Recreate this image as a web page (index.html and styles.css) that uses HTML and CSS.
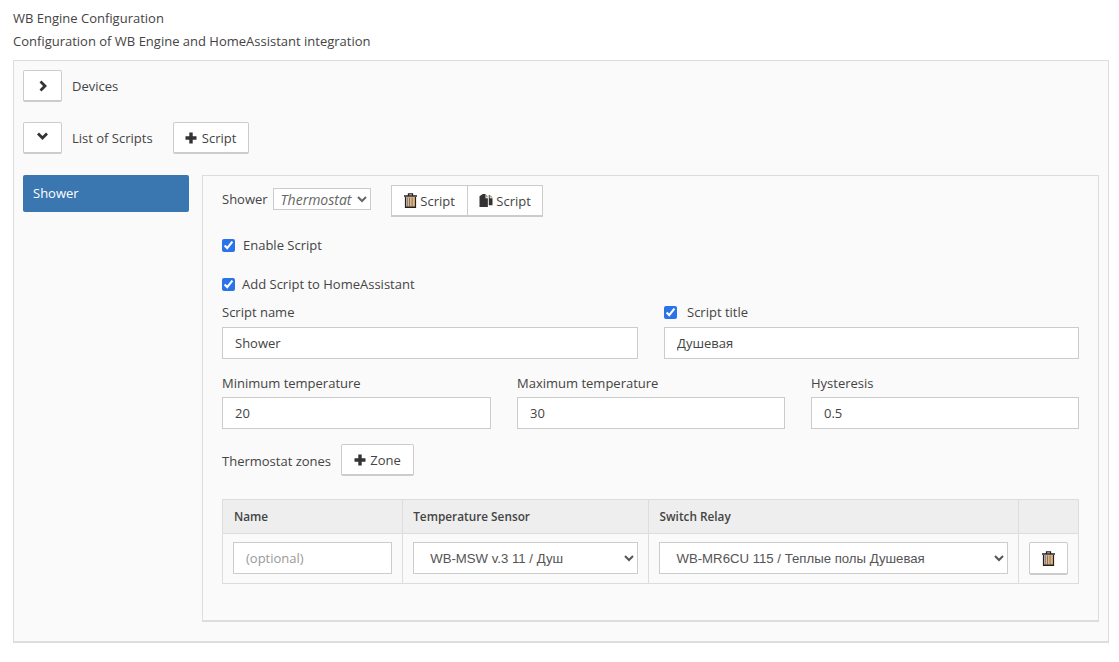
FILE: index.html
```html
<!DOCTYPE html>
<html lang="en">
<head>
<meta charset="utf-8">
<title>WB Engine Configuration</title>
<link rel="stylesheet" href="styles.css">
</head>
<body>
<div class="page">
  <div class="title">WB Engine Configuration</div>
  <div class="subtitle">Configuration of WB Engine and HomeAssistant integration</div>
  <div class="well">
    <div class="row row-devices">
      <button class="btn btn-toggle" type="button"><svg class="ico" width="12" height="12" viewBox="0 0 12 12"><path d="M3.500 1.500 8 6l-4.500 4.500" fill="none" stroke="#333" stroke-width="2.800"/></svg></button>
      <span>Devices</span>
    </div>
    <div class="row row-list">
      <button class="btn btn-toggle" type="button"><svg class="ico ico-up" width="13" height="12" viewBox="0 0 13 12"><path d="M2 3.500 6.500 8 11 3.500" fill="none" stroke="#333" stroke-width="2.800"/></svg></button>
      <span>List of Scripts</span>
      <button class="btn btn-add" type="button"><svg class="ico" width="12" height="12" viewBox="0 0 12 12"><path d="M6 .5v11M.5 6h11" fill="none" stroke="#333" stroke-width="3.400"/></svg>Script</button>
    </div>
    <div class="content">
      <div class="sidebar"><div class="side-item">Shower</div></div>
      <div class="panel">
        <div class="script-head">
          <span>Shower</span>
          <select class="type-select"><option>Thermostat</option></select>
          <div class="btn-group">
            <button class="btn btn-grp" type="button"><svg class="ico" width="13" height="15" viewBox="0 0 13 15"><use href="#trash"/></svg>Script</button>
            <button class="btn btn-grp" type="button"><svg class="ico" width="14" height="13" viewBox="0 0 14 14"><path d="M0 2.500 3.500 0h3v4.500H9V14H0z" fill="#333"/><path d="M10 1h1v3.500h3V12H10z" fill="#333"/><path d="M7.300 .5 9 3.500H7.300z" fill="#666"/><path d="M11.700 1 14 3.700H11.700z" fill="#b9772e"/></svg>Script</button>
          </div>
        </div>
        <label class="check check-enable"><input type="checkbox" checked>Enable Script</label>
        <label class="check check-ha"><input type="checkbox" checked>Add Script to HomeAssistant</label>
        <div class="fields fields-two">
          <div class="field">
            <div class="field-label">Script name</div>
            <input class="input" type="text" value="Shower">
          </div>
          <div class="field">
            <label class="field-label check-title"><input type="checkbox" checked>Script title</label>
            <input class="input" type="text" value="Душевая">
          </div>
        </div>
        <div class="fields fields-three">
          <div class="field">
            <div class="field-label">Minimum temperature</div>
            <input class="input" type="text" value="20">
          </div>
          <div class="field">
            <div class="field-label">Maximum temperature</div>
            <input class="input" type="text" value="30">
          </div>
          <div class="field">
            <div class="field-label">Hysteresis</div>
            <input class="input" type="text" value="0.5">
          </div>
        </div>
        <div class="zones-head">
          <span>Thermostat zones</span>
          <button class="btn btn-zone" type="button"><svg class="ico" width="12" height="12" viewBox="0 0 12 12"><path d="M6 .5v11M.5 6h11" fill="none" stroke="#333" stroke-width="3.400"/></svg>Zone</button>
        </div>
        <table class="zones">
          <colgroup>
            <col class="col-name"><col class="col-sensor"><col class="col-relay"><col class="col-action">
          </colgroup>
          <thead>
            <tr><th>Name</th><th>Temperature Sensor</th><th>Switch Relay</th><th></th></tr>
          </thead>
          <tbody>
            <tr>
              <td><input class="input input-cell" type="text" placeholder="(optional)"></td>
              <td><select class="cell-select"><option>WB-MSW v.3 11 / Душ</option></select></td>
              <td><select class="cell-select"><option>WB-MR6CU 115 / Теплые полы Душевая</option></select></td>
              <td><button class="btn btn-del" type="button"><svg class="ico" width="13" height="15" viewBox="0 0 13 15"><use href="#trash"/></svg></button></td>
            </tr>
          </tbody>
        </table>
      </div>
    </div>
  </div>
</div>
<svg class="defs" width="0" height="0" aria-hidden="true">
  <symbol id="trash" viewBox="0 0 13 15">
    <path d="M4.500 2.500V.8h4v1.700M0 3h13" fill="none" stroke="#222" stroke-width="1.300"/>
    <path d="M1.500 4h10v10.500h-10z" fill="#eeb070"/>
    <path d="M5 4.500h1v9H5zM7.600 4.500h1v9H7.600zM3 4.500h.8v9H3z" fill="#5f80a4"/>
    <path d="M1.500 4v10.500h10V4M1.500 14h10" fill="none" stroke="#222" stroke-width="1.200"/>
  </symbol>
</svg>
</body>
</html>
```
FILE: styles.css
```css
* { box-sizing: border-box; }
html, body { margin: 0; background: #fff; }
body { font-family: "Open Sans", "Noto Sans", sans-serif; font-size: 13px; color: #444; }
.page { padding: 9px 10px 0 13px; }
.defs { position: absolute; }
.title { height: 23px; line-height: 19px; }
.subtitle { height: 28px; line-height: 19px; }
.well { height: 583px; background: #fafafa; border: 1px solid #ddd; border-bottom-width: 2px; padding: 9px 9px; }
.row { display: flex; align-items: center; }
.row-devices { height: 32px; margin-bottom: 20px; gap: 10px; }
.row-list { height: 32px; margin-bottom: 21px; gap: 10px; }
.btn { font: inherit; color: #444; background: #fff; border: 1px solid #ccc; border-bottom-width: 2px; border-radius: 2px; display: inline-flex; align-items: center; justify-content: center; padding: 0; }
.btn-toggle { width: 39px; height: 100%; }
.btn-add { width: 76px; height: 32px; margin-left: 10px; gap: 5px; }
.ico { flex: none; }
.ico-up { margin-bottom: 3px; }
.content { display: flex; align-items: flex-start; gap: 13px; }
.sidebar { width: 166px; flex: none; }
.side-item { height: 37px; line-height: 36px; padding-left: 10px; background: #3a76b0; color: #fff; border-radius: 2px; }
.panel { width: 897px; height: 447px; border: 1px solid #ddd; border-bottom-width: 2px; padding: 9px 19px 0 19px; }
.script-head { display: flex; align-items: center; height: 32px; }
.type-select { font: italic 14px "Open Sans", sans-serif; color: #666; width: 98px; height: 22px; margin-left: 5px; background: #fff; border: 1px solid #ccc; padding: 0 0 0 3px; margin-bottom: 4px; }
.script-head > span { margin-bottom: 4px; }
.btn-group { display: flex; margin-left: 20px; height: 32px; }
.btn-grp { width: 77px; height: 32px; gap: 3px; padding-left: 1px; border-radius: 0; }
.btn-grp + .btn-grp { width: 76px; margin-left: -1px; }
.check { display: flex; align-items: center; gap: 8px; height: 20px; }
.check input, .check-title input { margin: 0; width: 13px; height: 13px; flex: none; accent-color: #2b73e8; }
.check-enable { margin-top: 18px; }
.check-ha { margin-top: 19px; gap: 7px; }
.fields { display: grid; }
.fields-two { grid-template-columns: 416px 415px; column-gap: 26px; margin-top: 8px; }
.fields-three { grid-template-columns: 269px 268px 268px; column-gap: 26px; margin-top: 14px; }
.field-label { display: flex; align-items: center; height: 20px; margin-bottom: 5px; }
.fields-three .field-label { margin-bottom: 4px; }
.check-title { gap: 10px; }
.input { font: inherit; color: #444; width: 100%; height: 32px; padding: 0 12px; background: #fff; border: 1px solid #ccc; border-radius: 0; display: block; outline: none; }
.input::placeholder { color: #999; }
.zones-head { display: flex; align-items: center; height: 32px; margin-top: 15px; gap: 10px; }
.zones-head > span { margin-top: 2px; }
.btn-zone { width: 73px; height: 32px; gap: 4px; }
.zones { width: 857px; margin-top: 23px; border-collapse: collapse; table-layout: fixed; }
.col-name { width: 180px; }
.col-sensor { width: 246px; }
.col-relay { width: 369px; }
.col-action { width: 60px; }
.zones th, .zones td { border: 1px solid #ddd; padding: 8px 10px; text-align: left; vertical-align: top; }
.zones th { background: #eee; height: 34px; padding: 0 10px 1px; font-weight: 600; font-size: 11.800px; color: #444; vertical-align: middle; }
.zones th:first-child { padding-left: 11px; }
.zones td { height: 50px; }
.input-cell { height: 32px; }
.cell-select { font: 13.200px "Liberation Sans", "Noto Sans", sans-serif; color: #555; width: 100%; height: 32px; background: #fff; border: 1px solid #ccc; border-radius: 0; padding: 1px 12px 0; }
.btn-del { width: 39px; height: 33px; }
```
